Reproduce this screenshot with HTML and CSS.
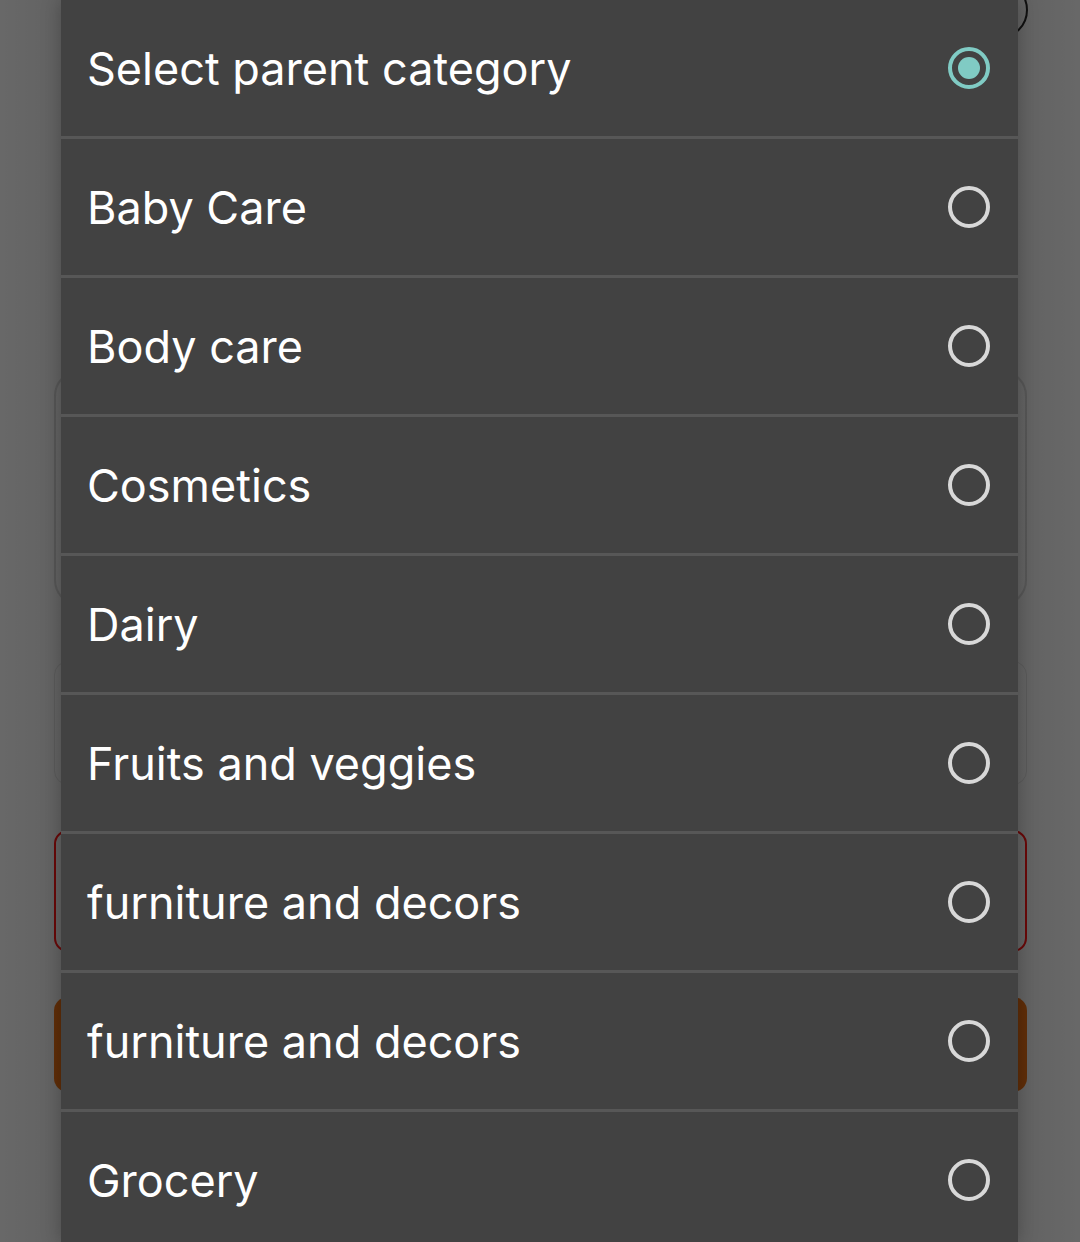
FILE: index.html
```html
<!DOCTYPE html>
<html>
<head>
<meta charset="utf-8">
<link rel="stylesheet" href="styles.css">
</head>
<body>
<div class="page">
  <div class="head"><span class="close-ring"></span></div>
  <div class="field field-big"></div>
  <div class="field field-small"></div>
  <div class="field field-error"></div>
  <div class="button"></div>
</div>
<div class="scrim"></div>
<div class="dialog">
  <div class="row"><span class="label">Select parent category</span><span class="radio checked"></span></div>
  <div class="row"><span class="label">Baby Care</span><span class="radio"></span></div>
  <div class="row"><span class="label">Body care</span><span class="radio"></span></div>
  <div class="row"><span class="label">Cosmetics</span><span class="radio"></span></div>
  <div class="row"><span class="label">Dairy</span><span class="radio"></span></div>
  <div class="row"><span class="label">Fruits and veggies</span><span class="radio"></span></div>
  <div class="row"><span class="label">furniture and decors</span><span class="radio"></span></div>
  <div class="row"><span class="label">furniture and decors</span><span class="radio"></span></div>
  <div class="row last"><span class="label">Grocery</span><span class="radio"></span></div>
</div>
</body>
</html>
```
FILE: styles.css
```css
html, body {
  margin: 0;
  padding: 0;
}
body {
  width: 1080px;
  height: 1242px;
  overflow: hidden;
  background: #686868;
  position: relative;
  font-family: "Inter", "Open Sans", sans-serif;
}
.page {
  padding: 0 53px 0 54px;
  display: flex;
  flex-direction: column;
}
.head {
  height: 370px;
  display: flex;
  justify-content: flex-end;
}
.close-ring {
  width: 58px;
  height: 58px;
  border: 2px solid #111;
  border-radius: 50%;
  margin-top: -19px;
  margin-right: -1px;
  box-sizing: border-box;
}
.field {
  box-sizing: border-box;
  border: 2px solid #5b5b5b;
  border-radius: 14px;
}
.field-big {
  height: 236px;
  border-radius: 26px;
}
.field-small {
  height: 124px;
  margin-top: 55px;
  border-width: 1px;
  border-color: #5f5f5f;
}
.field-error {
  height: 122px;
  margin-top: 45px;
  border-color: #6e0808;
}
.button {
  height: 95px;
  margin-top: 45px;
  background: #643008;
  border-radius: 14px;
}
.scrim {
  position: absolute;
  left: 0;
  top: 0;
  right: 0;
  bottom: 0;
  background: linear-gradient(90deg, rgba(0,0,0,0) 0, rgba(0,0,0,0.06) 61px, rgba(0,0,0,0.06) 1018px, rgba(0,0,0,0) 1080px);
}
.dialog {
  position: absolute;
  left: 61px;
  top: 0;
  width: 957px;
  height: 1242px;
  background: #424242;
  display: flex;
  flex-direction: column;
  box-shadow: 0 0 18px rgba(0,0,0,0.25);
}
.row {
  height: 136px;
  flex: none;
  border-bottom: 3px solid #575757;
  display: flex;
  align-items: center;
  justify-content: space-between;
  padding: 0 28px 0 26px;
}
.row.last {
  border-bottom: none;
}
.label {
  color: #ffffff;
  font-size: 45px;
  letter-spacing: 0;
  line-height: 1;
  margin-top: 0;
}
.radio {
  width: 42px;
  height: 42px;
  box-sizing: border-box;
  border: 4px solid #d8d8d8;
  border-radius: 50%;
  display: flex;
  align-items: center;
  justify-content: center;
}
.radio.checked {
  border-color: #80cbc4;
}
.radio.checked::after {
  content: "";
  width: 22px;
  height: 22px;
  border-radius: 50%;
  background: #80cbc4;
}
```
